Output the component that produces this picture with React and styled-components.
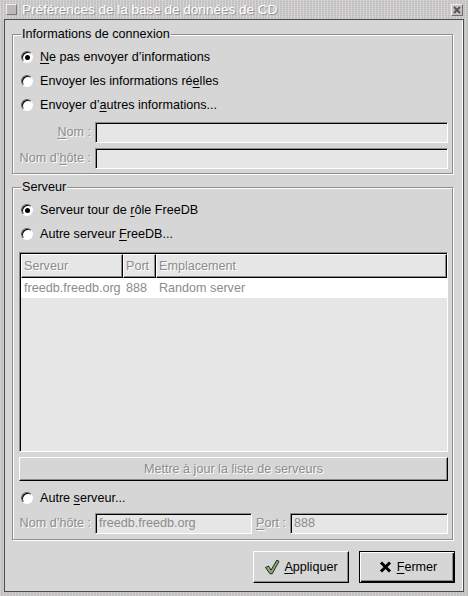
import React from 'react';
import styled, { createGlobalStyle, css } from 'styled-components';

const Global = createGlobalStyle`
  html, body { margin: 0; padding: 0; }
  body {
    width: 468px; height: 596px; overflow: hidden;
    font-family: "Liberation Sans", Arial, sans-serif;
    font-size: 12.6px; line-height: 15px; color: #000;
  }
`;

const dim = css`
  color: #8c8c8c;
  text-shadow: 1px 1px 0 #fff;
`;

const Window = styled.div`
  width: 468px; height: 596px; box-sizing: border-box;
  display: flex; flex-direction: column;
  background-color: #c3bfc3;
  background-image:
    repeating-linear-gradient(90deg, rgba(255, 215, 255, 0.35) 0 1px, transparent 1px 3px),
    repeating-linear-gradient(0deg, rgba(175, 225, 175, 0.3) 0 1px, transparent 1px 2px);
`;

const TitleBar = styled.div`
  height: 19px; flex: none; box-sizing: border-box;
  display: flex; align-items: center; gap: 5px;
  padding: 0 5px 0 6px;
  background-color: #c2bec2;
  background-image:
    repeating-linear-gradient(90deg, rgba(255, 230, 255, 0.35) 0 1px, transparent 1px 3px),
    repeating-linear-gradient(0deg, rgba(200, 235, 200, 0.3) 0 1px, transparent 1px 2px);
`;

const WinIcon = styled.span`
  width: 11px; height: 11px; box-sizing: border-box; flex: none;
  border: 1px solid; border-color: #efefef #7a7a7a #7a7a7a #efefef;
  background: #bcb8bc;
`;

const Title = styled.span`
  flex: 1; color: #fff; font-size: 13.5px; white-space: nowrap;
  text-shadow: 1px 1px 0 rgba(0, 0, 0, 0.28);
`;

const CloseBox = styled.span`
  width: 12px; height: 12px; box-sizing: border-box; flex: none;
  border: 1px solid; border-color: #f0f0f0 #6e6e6e #6e6e6e #f0f0f0;
  background: #c4c0c4;
  display: flex; align-items: center; justify-content: center;
`;

const Body = styled.div`
  flex: 1; margin: 0 4px 4px; box-sizing: border-box;
  border: 1px solid #4a4a4a;
  background: #d6d6d6;
  box-shadow: inset -1px 0 0 #fff;
  display: flex; flex-direction: column;
  padding: 7px 8px 8px 7px;
`;

const Frame = styled.fieldset`
  margin: ${p => (p.$first ? '0' : '6px')} 2px 0 0;
  padding: 3px 4px ${p => p.$pb}px 6px;
  min-width: 0;
  border: 1px solid #8e8e8e;
  box-shadow: inset 1px 1px 0 #fff, 1px 1px 0 #fff;
  display: flex; flex-direction: column;
`;

const Legend = styled.legend`
  padding: 0 1px; margin-left: 2px;
  line-height: 15px; background: #d6d6d6;
`;

const RadioRow = styled.div`
  height: 24px; display: flex; align-items: center;
  margin-top: ${p => p.$mt || 0}px;
`;

const Radio = styled.span`
  flex: none; width: 12px; height: 12px; box-sizing: border-box;
  border-radius: 50%;
  border: 1px solid; border-color: #5e5e5e #fff #fff #5e5e5e;
  background: #fff;
  box-shadow: inset 1px 1px 0 #000;
  margin: 0 7px 0 2px;
  display: flex; align-items: center; justify-content: center;
  &::after {
    content: ''; width: 5px; height: 5px; border-radius: 50%;
    background: #000;
    display: ${p => (p.$on ? 'block' : 'none')};
  }
`;

const FieldGrid = styled.div`
  display: grid;
  grid-template-columns: ${p => p.$cols};
  column-gap: 4px; row-gap: 5px;
  margin-top: ${p => p.$mt}px;
  align-items: center;
`;

const FieldLabel = styled.span`
  ${dim};
  text-align: right; white-space: nowrap;
`;

const Entry = styled.div`
  height: 21px; box-sizing: border-box; min-width: 0;
  border: 1px solid; border-color: #8c8c8c #fff #fff #8c8c8c;
  box-shadow: inset 1px 1px 0 #000;
  background: #e6e6e6; color: #8c8c8c;
  display: flex; align-items: center; padding-left: 3px;
`;

const List = styled.div`
  height: 200px; box-sizing: border-box; margin-top: 6px;
  border: 1px solid; border-color: #8c8c8c #fff #fff #8c8c8c;
  box-shadow: inset 1px 1px 0 #000;
  background: #e6e6e6;
  padding: 1px 0 0 1px;
  display: flex; flex-direction: column;
`;

const cols = css`
  display: grid;
  grid-template-columns: 102px 33px 1fr;
`;

const Header = styled.div`
  ${cols};
  height: 24px;
`;

const HeadCell = styled.div`
  box-sizing: border-box;
  border: 1px solid; border-color: #fff #000 #000 #fff;
  box-shadow: inset -1px -1px 0 #8c8c8c;
  padding-left: 2px;
  display: flex; align-items: center;
  ${dim};
`;

const Row = styled.div`
  ${cols};
  height: 20px; background: #fff; color: #8c8c8c;
`;

const Cell = styled.div`
  padding-left: 3px; display: flex; align-items: center; white-space: nowrap;
`;

const WideButton = styled.div`
  height: 24px; box-sizing: border-box; margin-top: 5px;
  border: 1px solid; border-color: #fff #000 #000 #fff;
  box-shadow: inset -1px -1px 0 #8c8c8c;
  display: flex; align-items: center; justify-content: center;
  ${dim};
`;

const ButtonRow = styled.div`
  margin-top: 11px;
  display: flex; justify-content: flex-end; gap: 10px;
`;

const DlgButton = styled.button`
  width: 96px; height: 32px; box-sizing: border-box; margin: 0; padding: 0;
  font: inherit; color: #000; background: #d6d6d6;
  display: flex; align-items: center; justify-content: center; gap: 4px;
  ${p => p.$default
    ? css`
        border: 1px solid #000;
        box-shadow: inset 1px 1px 0 #fff, inset -1px -1px 0 #000, inset -2px -2px 0 #8c8c8c;
      `
    : css`
        border: 1px solid; border-color: #fff #000 #000 #fff;
        box-shadow: inset -1px -1px 0 #8c8c8c;
      `}
`;

const Icon = styled.svg`
  flex: none; display: block;
`;

const U = styled.u`
  text-decoration-thickness: 1px;
  text-underline-offset: 2px;
`;

function Check() {
  return (
    <Icon width="16" height="16" viewBox="0 0 16 16">
      <path
        d="M1.5 8.5 L4.5 7 L7 11.2 L12.8 1.2 L15 2.3 L8.2 14.8 L6 14.8 Z"
        fill="#88aa76" stroke="#1f2a18" strokeWidth="1" strokeLinejoin="round"
      />
    </Icon>
  );
}

function Cross() {
  return (
    <Icon width="16" height="16" viewBox="0 0 16 16">
      <path d="M4 3.5 L13 12.5 M13 3.5 L4 12.5" stroke="#000" strokeWidth="3" />
    </Icon>
  );
}

export default function App() {
  return (
    <>
      <Global />
      <Window>
        <TitleBar>
          <WinIcon />
          <Title>Préférences de la base de données de CD</Title>
          <CloseBox>
            <svg width="8" height="8" viewBox="0 0 8 8">
              <path d="M1 1 L7 7 M7 1 L1 7" stroke="#555" strokeWidth="2" />
            </svg>
          </CloseBox>
        </TitleBar>
        <Body>
          <Frame $first $pb={4}>
            <Legend>Informations de connexion</Legend>
            <RadioRow>
              <Radio $on />
              <span><U>N</U>e pas envoyer d’informations</span>
            </RadioRow>
            <RadioRow>
              <Radio />
              <span>Envoyer les informations ré<U>e</U>lles</span>
            </RadioRow>
            <RadioRow>
              <Radio />
              <span>Envoyer d’<U>a</U>utres informations...</span>
            </RadioRow>
            <FieldGrid $cols="72px 1fr" $mt={5}>
              <FieldLabel><U>N</U>om :</FieldLabel>
              <Entry />
              <FieldLabel>Nom d’<U>h</U>ôte :</FieldLabel>
              <Entry />
            </FieldGrid>
          </Frame>
          <Frame $pb={5}>
            <Legend>Serveur</Legend>
            <RadioRow>
              <Radio $on />
              <span>Serveur tour de <U>r</U>ôle FreeDB</span>
            </RadioRow>
            <RadioRow>
              <Radio />
              <span>Autre serveur <U>F</U>reeDB...</span>
            </RadioRow>
            <List>
              <Header>
                <HeadCell>Serveur</HeadCell>
                <HeadCell>Port</HeadCell>
                <HeadCell>Emplacement</HeadCell>
              </Header>
              <Row>
                <Cell>freedb.freedb.org</Cell>
                <Cell>888</Cell>
                <Cell>Random server</Cell>
              </Row>
            </List>
            <WideButton>Mettre à jour la liste de serveurs</WideButton>
            <RadioRow $mt={5}>
              <Radio />
              <span>Autre <U>s</U>erveur...</span>
            </RadioRow>
            <FieldGrid $cols="72px 157px auto 1fr" $mt={3}>
              <FieldLabel>Nom d’hôte :</FieldLabel>
              <Entry>freedb.freedb.org</Entry>
              <FieldLabel><U>P</U>ort :</FieldLabel>
              <Entry>888</Entry>
            </FieldGrid>
          </Frame>
          <ButtonRow>
            <DlgButton>
              <Check />
              <span><U>A</U>ppliquer</span>
            </DlgButton>
            <DlgButton $default>
              <Cross />
              <span><U>F</U>ermer</span>
            </DlgButton>
          </ButtonRow>
        </Body>
      </Window>
    </>
  );
}
